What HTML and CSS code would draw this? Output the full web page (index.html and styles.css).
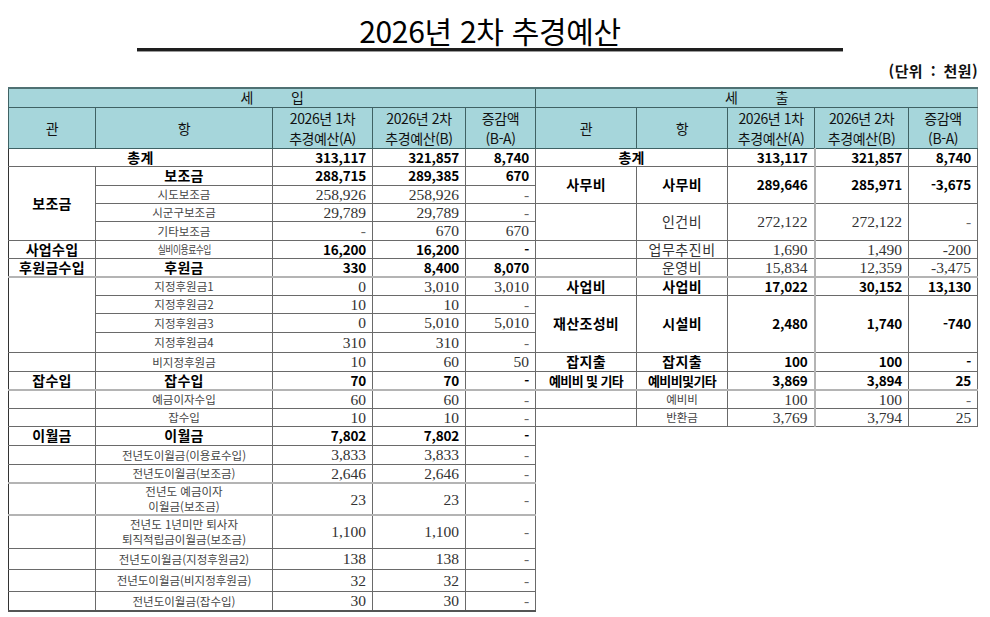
FILE: index.html
```html
<!DOCTYPE html>
<html lang="ko">
<head>
<meta charset="utf-8">
<title>2026년 2차 추경예산</title>
<link rel="stylesheet" href="styles.css">
</head>
<body>
<div class="page">
  <div class="title-wrap"><h1 class="title">2026년 2차 추경예산</h1></div>
  <div class="unit">(단위 : 천원)</div>
  <table class="budget">
    <colgroup>
      <col class="c-gwan-l"><col class="c-hang-l"><col class="c-a-l"><col class="c-b-l"><col class="c-d-l">
      <col class="c-gwan-r"><col class="c-hang-r"><col class="c-a-r"><col class="c-b-r"><col class="c-d-r">
    </colgroup>
    <thead>
      <tr class="h0">
        <th colspan="5" class="sec first">세<span class="gap"></span>입</th>
        <th colspan="5" class="sec mid last">세<span class="gap"></span>출</th>
      </tr>
      <tr class="h1">
        <th class="first">관</th><th>항</th><th>2026년 1차<br>추경예산(A)</th><th>2026년 2차<br>추경예산(B)</th><th>증감액<br>(B-A)</th>
        <th class="mid">관</th><th>항</th><th>2026년 1차<br>추경예산(A)</th><th>2026년 2차<br>추경예산(B)</th><th class="last">증감액<br>(B-A)</th>
      </tr>
    </thead>
    <tbody>
      <tr class="r18">
        <td colspan="2" class="lb first">총계</td><td class="nb">313,117</td><td class="nb">321,857</td><td class="nb">8,740</td>
        <td colspan="2" class="lb">총계</td><td class="nb">313,117</td><td class="nb gB">321,857</td><td class="nb">8,740</td>
      </tr>
      <tr class="r19">
        <td rowspan="4" class="lb first">보조금</td><td class="lb">보조금</td><td class="nb">288,715</td><td class="nb">289,385</td><td class="nb">670</td>
        <td rowspan="2" class="lb">사무비</td><td rowspan="2" class="lb">사무비</td><td rowspan="2" class="nb">289,646</td><td rowspan="2" class="nb gB">285,971</td><td rowspan="2" class="nb">-3,675</td>
      </tr>
      <tr class="r18">
        <td class="ls">시도보조금</td><td class="ns">258,926</td><td class="ns">258,926</td><td class="ns dash">-</td>
      </tr>
      <tr class="r18">
        <td class="ls">시군구보조금</td><td class="ns">29,789</td><td class="ns">29,789</td><td class="ns dash">-</td>
        <td rowspan="2"></td><td rowspan="2" class="lm">인건비</td><td rowspan="2" class="ns">272,122</td><td rowspan="2" class="ns gB">272,122</td><td rowspan="2" class="ns dash">-</td>
      </tr>
      <tr class="r19">
        <td class="ls">기타보조금</td><td class="ns dash">-</td><td class="ns">670</td><td class="ns">670</td>
      </tr>
      <tr class="r18">
        <td class="lb first">사업수입</td><td class="ls"><span class="squish">실비이용료수입</span></td><td class="nb">16,200</td><td class="nb">16,200</td><td class="nb dash">-</td>
        <td></td><td class="lm">업무추진비</td><td class="ns">1,690</td><td class="ns gB">1,490</td><td class="ns">-200</td>
      </tr>
      <tr class="r19">
        <td class="lb first">후원금수입</td><td class="lb">후원금</td><td class="nb">330</td><td class="nb">8,400</td><td class="nb">8,070</td>
        <td></td><td class="lm">운영비</td><td class="ns">15,834</td><td class="ns gB">12,359</td><td class="ns">-3,475</td>
      </tr>
      <tr class="r18 sep">
        <td rowspan="4" class="first"></td><td class="ls">지정후원금1</td><td class="ns">0</td><td class="ns">3,010</td><td class="ns">3,010</td>
        <td class="lb">사업비</td><td class="lb">사업비</td><td class="nb">17,022</td><td class="nb gB">30,152</td><td class="nb">13,130</td>
      </tr>
      <tr class="r18">
        <td class="ls">지정후원금2</td><td class="ns">10</td><td class="ns">10</td><td class="ns dash">-</td>
        <td rowspan="3" class="lb">재산조성비</td><td rowspan="3" class="lb">시설비</td><td rowspan="3" class="nb">2,480</td><td rowspan="3" class="nb gB">1,740</td><td rowspan="3" class="nb">-740</td>
      </tr>
      <tr class="r19">
        <td class="ls">지정후원금3</td><td class="ns">0</td><td class="ns">5,010</td><td class="ns">5,010</td>
      </tr>
      <tr class="r20">
        <td class="ls">지정후원금4</td><td class="ns">310</td><td class="ns">310</td><td class="ns dash">-</td>
      </tr>
      <tr class="r19">
        <td class="first"></td><td class="ls">비지정후원금</td><td class="ns">10</td><td class="ns">60</td><td class="ns">50</td>
        <td class="lb">잡지출</td><td class="lb">잡지출</td><td class="nb">100</td><td class="nb gB">100</td><td class="nb dash">-</td>
      </tr>
      <tr class="r19">
        <td class="lb first">잡수입</td><td class="lb">잡수입</td><td class="nb">70</td><td class="nb">70</td><td class="nb dash">-</td>
        <td class="lb narrow">예비비 및 기타</td><td class="lb narrow">예비비및기타</td><td class="nb">3,869</td><td class="nb gB">3,894</td><td class="nb">25</td>
      </tr>
      <tr class="r18 sep">
        <td class="first"></td><td class="ls">예금이자수입</td><td class="ns">60</td><td class="ns">60</td><td class="ns dash">-</td>
        <td></td><td class="ls">예비비</td><td class="ns">100</td><td class="ns gB">100</td><td class="ns dash">-</td>
      </tr>
      <tr class="r18">
        <td class="first"></td><td class="ls">잡수입</td><td class="ns">10</td><td class="ns">10</td><td class="ns dash">-</td>
        <td></td><td class="ls">반환금</td><td class="ns">3,769</td><td class="ns gB">3,794</td><td class="ns">25</td>
      </tr>
      <tr class="r19">
        <td class="lb first">이월금</td><td class="lb">이월금</td><td class="nb">7,802</td><td class="nb">7,802</td><td class="nb dash">-</td>
        <td rowspan="8" colspan="5" class="void"></td>
      </tr>
      <tr class="r19">
        <td class="first"></td><td class="ls">전년도이월금(이용료수입)</td><td class="ns">3,833</td><td class="ns">3,833</td><td class="ns dash">-</td>
      </tr>
      <tr class="r19">
        <td class="first"></td><td class="ls">전년도이월금(보조금)</td><td class="ns">2,646</td><td class="ns">2,646</td><td class="ns dash">-</td>
      </tr>
      <tr class="r32 sep">
        <td class="first"></td><td class="ls two"><span class="ln">전년도 예금이자</span><span class="ln">이월금(보조금)</span></td><td class="ns">23</td><td class="ns">23</td><td class="ns dash">-</td>
      </tr>
      <tr class="r33 sep">
        <td class="first"></td><td class="ls two"><span class="ln">전년도 1년미만 퇴사자</span><span class="ln">퇴직적립금이월금(보조금)</span></td><td class="ns">1,100</td><td class="ns">1,100</td><td class="ns dash">-</td>
      </tr>
      <tr class="r21">
        <td class="first"></td><td class="ls">전년도이월금(지정후원금2)</td><td class="ns">138</td><td class="ns">138</td><td class="ns dash">-</td>
      </tr>
      <tr class="r22">
        <td class="first"></td><td class="ls">전년도이월금(비지정후원금)</td><td class="ns">32</td><td class="ns">32</td><td class="ns dash">-</td>
      </tr>
      <tr class="r20 lastrow">
        <td class="first"></td><td class="ls">전년도이월금(잡수입)</td><td class="ns">30</td><td class="ns">30</td><td class="ns dash">-</td>
      </tr>
    </tbody>
  </table>
</div>
</body>
</html>
```

FILE: styles.css
```css
* { box-sizing: border-box; }
html, body { margin: 0; padding: 0; background: #ffffff; }
body {
  font-family: "Noto Sans CJK KR", "Noto Sans", sans-serif;
  color: #111;
}
.page { width: 990px; padding: 0 8px; }

.title-wrap {
  margin-left: 129px;
  width: 706px;
  height: 51px;
  padding-top: 12px;
  border-bottom: 3px solid #1e1e1e;
  box-shadow: 0 1px 0 #9a9a9a;
  text-align: center;
}
.title {
  margin: 0;
  font-size: 30px;
  font-weight: 400;
  line-height: 36px;
  color: #000;
  letter-spacing: -0.3px;
}

.unit {
  margin-top: 11px;
  padding-right: 4px;
  text-align: right;
  font-size: 15px;
  font-weight: 700;
  line-height: 18px;
  letter-spacing: 0.4px;
  word-spacing: 3px;
}

.budget {
  margin-top: 7px;
  width: 969px;
  border-collapse: collapse;
  table-layout: fixed;
}
.c-gwan-l { width: 87px; }
.c-hang-l { width: 177px; }
.c-a-l { width: 100px; }
.c-b-l { width: 93px; }
.c-d-l { width: 70px; }
.c-gwan-r { width: 101px; }
.c-hang-r { width: 91px; }
.c-a-r { width: 87px; }
.c-b-r { width: 94px; }
.c-d-r { width: 69px; }

.budget th {
  background: #a6d6db;
  border: 1px solid #3f6264;
  font-weight: 400;
  font-size: 14px;
  letter-spacing: -0.4px;
  color: #111;
  padding: 0;
  text-align: center;
  vertical-align: middle;
}
.budget tr.h0 { height: 19px; }
.budget tr.h0 th { border-top: 2px solid #4f7173; line-height: 17px; }
.budget tr.h1 { height: 41px; }
.budget tr.h1 th { line-height: 20px; }
.budget th.mid { border-left: 1px solid #b9c4c5; }
.budget th.last { border-right: 1px solid #8fa3a4; }
.gap { display: inline-block; width: 38px; }

.budget td {
  border: 1px solid #6a6a6a;
  padding: 0;
  vertical-align: middle;
  white-space: nowrap;
}
.budget td.first { border-left: 1px solid #333; }
.budget tr.sep > td { border-top: 2px solid #b4b4b4; }
.budget td.gB { border-left: 2px solid #b4b4b4; }
.budget tr.lastrow > td { border-bottom: 2px solid #555; }
.budget td.void { border: none; }

.r18 { height: 18px; }
.r19 { height: 19px; }
.r20 { height: 20px; }
.r21 { height: 21px; }
.r22 { height: 22px; }
.r32 { height: 32px; }
.r33 { height: 33px; }

.lb {
  text-align: center;
  font-size: 14px;
  font-weight: 700;
  line-height: 15px;
  color: #000;
  letter-spacing: 0.3px;
}
.lb.narrow { font-size: 13px; letter-spacing: -0.6px; }
.lm {
  text-align: center;
  font-size: 14px;
  font-weight: 400;
  line-height: 15px;
  color: #333;
  letter-spacing: 0.5px;
}
.ls {
  text-align: center;
  font-size: 11.5px;
  font-weight: 400;
  line-height: 14px;
  color: #444;
}
.ls.two { font-size: 11.5px; line-height: 15px; }
.ls.two .ln { display: block; height: 15px; overflow: visible; }
.squish {
  display: inline-block;
  transform: scaleX(0.8);
  font-size: 11px;
  letter-spacing: -0.6px;
}
.nb {
  text-align: right;
  padding-right: 6px !important;
  font-size: 13.5px;
  font-weight: 700;
  line-height: 15px;
  letter-spacing: -0.2px;
  color: #000;
}
.ns {
  text-align: right;
  padding-right: 6px !important;
  font-family: "Liberation Serif", "Noto Sans CJK KR", serif;
  font-size: 15.5px;
  font-weight: 400;
  line-height: 15px;
  color: #333;
}
.ns.dash { color: #666; }
```
